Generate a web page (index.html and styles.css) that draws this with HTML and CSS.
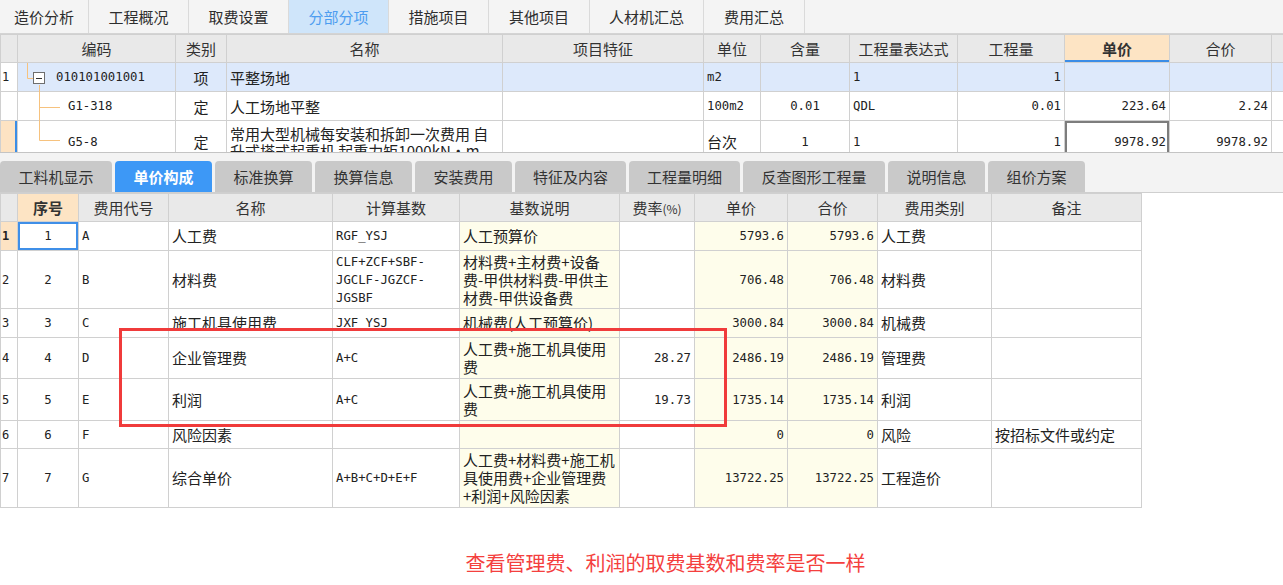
FILE: index.html
```html
<!DOCTYPE html>
<html lang="zh">
<head>
<meta charset="utf-8">
<title>单价构成</title>
<link rel="stylesheet" href="styles.css">
</head>
<body>
<div class="app">
  <div class="topbar">
    <div class="tab w89">造价分析</div>
    <div class="tab w100">工程概况</div>
    <div class="tab w100">取费设置</div>
    <div class="tab w100 active">分部分项</div>
    <div class="tab w100">措施项目</div>
    <div class="tab w101">其他项目</div>
    <div class="tab w114">人材机汇总</div>
    <div class="tab w101">费用汇总</div>
  </div>

  <div class="toppanel">
    <table class="tt">
      <colgroup>
        <col class="c17"><col class="c158"><col class="c51"><col class="c276"><col class="c201"><col class="c57"><col class="c89"><col class="c108"><col class="c107"><col class="c105"><col class="c102"><col class="c12">
      </colgroup>
      <thead>
        <tr>
          <th></th><th>编码</th><th>类别</th><th>名称</th><th>项目特征</th><th>单位</th><th>含量</th><th>工程量表达式</th><th>工程量</th><th class="hl">单价</th><th>合价</th><th></th>
        </tr>
      </thead>
      <tbody>
        <tr class="r1 sel">
          <td class="rn">1</td>
          <td class="code m"><span class="ind1">010101001001</span></td>
          <td class="c">项</td>
          <td>平整场地</td>
          <td></td>
          <td class="m">m2</td>
          <td></td>
          <td class="m">1</td>
          <td class="m r">1</td>
          <td></td>
          <td></td>
          <td></td>
        </tr>
        <tr class="r2">
          <td class="rn"></td>
          <td class="code m"><span class="ind2">G1-318</span></td>
          <td class="c">定</td>
          <td>人工场地平整</td>
          <td></td>
          <td class="m">100m2</td>
          <td class="m c">0.01</td>
          <td class="m">QDL</td>
          <td class="m r">0.01</td>
          <td class="m r">223.64</td>
          <td class="m r">2.24</td>
          <td></td>
        </tr>
        <tr class="r3">
          <td class="rn cur"></td>
          <td class="code m"><span class="ind2">G5-8</span></td>
          <td class="c">定</td>
          <td class="two">常用大型机械每安装和拆卸一次费用 自<br>升式塔式起重机 起重力矩1000kN·m</td>
          <td></td>
          <td>台次</td>
          <td class="m c">1</td>
          <td class="m">1</td>
          <td class="m r">1</td>
          <td class="m r focus">9978.92</td>
          <td class="m r">9978.92</td>
          <td></td>
        </tr>
      </tbody>
    </table>
    <svg class="tree" width="70" height="119" viewBox="0 0 70 119">
      <g stroke="#f6c27e" stroke-width="1" fill="none">
        <path d="M27.5 29 V44.5 H33"/>
        <path d="M39.5 51 V106.5"/>
        <path d="M39.5 73.5 H60"/>
        <path d="M39.5 106.5 H60"/>
      </g>
      <rect x="33.5" y="38.5" width="11" height="11" fill="#fff" stroke="#6e6e6e"/>
      <path d="M36 44.5 H42" stroke="#333" stroke-width="1"/>
    </svg>
  </div>

  <div class="subtabs">
    <div class="stab w112">工料机显示</div>
    <div class="stab w97 active">单价构成</div>
    <div class="stab w97">标准换算</div>
    <div class="stab w97">换算信息</div>
    <div class="stab w97">安装费用</div>
    <div class="stab w111">特征及内容</div>
    <div class="stab w111">工程量明细</div>
    <div class="stab w142">反查图形工程量</div>
    <div class="stab w97">说明信息</div>
    <div class="stab w97">组价方案</div>
  </div>

  <div class="bottom">
    <table class="bt">
      <colgroup>
        <col class="d17"><col class="d61"><col class="d90"><col class="d164"><col class="d127"><col class="d160"><col class="d75"><col class="d93"><col class="d90"><col class="d114"><col class="d150">
      </colgroup>
      <thead>
        <tr>
          <th></th><th class="hl">序号</th><th>费用代号</th><th>名称</th><th>计算基数</th><th>基数说明</th><th>费率<span class="pct">(%)</span></th><th>单价</th><th>合价</th><th>费用类别</th><th>备注</th>
        </tr>
      </thead>
      <tbody>
        <tr class="h29">
          <td class="rn cur">1</td><td class="m c focus">1</td><td class="m">A</td><td>人工费</td><td class="m">RGF_YSJ</td><td class="y">人工预算价</td><td></td><td class="m r y">5793.6</td><td class="m r y">5793.6</td><td>人工费</td><td></td>
        </tr>
        <tr class="h58">
          <td class="rn">2</td><td class="m c">2</td><td class="m">B</td><td>材料费</td><td class="m">CLF+ZCF+SBF-<br>JGCLF-JGZCF-<br>JGSBF</td><td class="y">材料费+主材费+设备<br>费-甲供材料费-甲供主<br>材费-甲供设备费</td><td></td><td class="m r y">706.48</td><td class="m r y">706.48</td><td>材料费</td><td></td>
        </tr>
        <tr class="h29">
          <td class="rn">3</td><td class="m c">3</td><td class="m">C</td><td>施工机具使用费</td><td class="m">JXF_YSJ</td><td class="y">机械费(人工预算价)</td><td></td><td class="m r y">3000.84</td><td class="m r y">3000.84</td><td>机械费</td><td></td>
        </tr>
        <tr class="h41">
          <td class="rn">4</td><td class="m c">4</td><td class="m">D</td><td>企业管理费</td><td class="m">A+C</td><td class="y">人工费+施工机具使用<br>费</td><td class="m r">28.27</td><td class="m r y">2486.19</td><td class="m r y">2486.19</td><td>管理费</td><td></td>
        </tr>
        <tr class="h42">
          <td class="rn">5</td><td class="m c">5</td><td class="m">E</td><td>利润</td><td class="m">A+C</td><td class="y">人工费+施工机具使用<br>费</td><td class="m r">19.73</td><td class="m r y">1735.14</td><td class="m r y">1735.14</td><td>利润</td><td></td>
        </tr>
        <tr class="h28">
          <td class="rn">6</td><td class="m c">6</td><td class="m">F</td><td>风险因素</td><td></td><td class="y"></td><td></td><td class="m r y">0</td><td class="m r y">0</td><td>风险</td><td>按招标文件或约定</td>
        </tr>
        <tr class="h59">
          <td class="rn">7</td><td class="m c">7</td><td class="m">G</td><td>综合单价</td><td class="m">A+B+C+D+E+F</td><td class="y">人工费+材料费+施工机<br>具使用费+企业管理费<br>+利润+风险因素</td><td></td><td class="m r y">13722.25</td><td class="m r y">13722.25</td><td>工程造价</td><td></td>
        </tr>
      </tbody>
    </table>
    <div class="redbox"></div>
  </div>

  <p class="caption">查看管理费、利润的取费基数和费率是否一样</p>
</div>
</body>
</html>
```

FILE: styles.css
```css
html, body {
  margin: 0;
  padding: 0;
  background: #ffffff;
}
body {
  font-family: "Noto Sans CJK SC", "Noto Sans", sans-serif;
  color: #333333;
  width: 1283px;
  height: 585px;
  overflow: hidden;
}

/* ---------- top tab bar ---------- */
.topbar {
  display: flex;
  height: 33px;
  background: #f4f4f4;
  border-bottom: 1px solid #d4d4d4;
}
.tab {
  box-sizing: border-box;
  display: flex;
  align-items: center;
  justify-content: center;
  font-size: 15px;
  color: #2e2e2e;
  border-right: 1px solid #dadada;
}
.tab.active {
  background: #cfe5fa;
  color: #4d9df0;
}
.w89 { width: 89px; }
.w100 { width: 100px; }
.w101 { width: 101px; }
.w114 { width: 114px; }

/* ---------- top grid ---------- */
.toppanel {
  position: relative;
  height: 118px;
  overflow: hidden;
  border-bottom: 1px solid #c4c4c4;
}
.tt, .bt {
  border-collapse: collapse;
  table-layout: fixed;
}
.tt { width: 1283px; }
.tt th, .tt td, .bt th, .bt td {
  border: 1px solid #d0d0d0;
  padding: 0 3px;
  overflow: hidden;
  white-space: nowrap;
  font-size: 15px;
  color: #222;
}
.tt th, .bt th {
  background: #e9e9e9;
  font-weight: normal;
  color: #333;
  height: 27px;
  text-align: center;
}
.tt th.hl {
  background: #fde4c4;
  font-weight: bold;
  box-shadow: inset 0 -2px 0 #3b8de6;
}
.bt th.hl {
  background: #fde4c4;
  font-weight: bold;
}
.pct { font-size: 12px; }
.tt tr.r1 td, .tt tr.r2 td { height: 28px; }
.tt tr.r3 td { height: 41px; }
.tt tr.sel td { background: #dde9fb; }
.tt tr.sel td.rn { background: #ffffff; }
.tt td.rn, .bt td.rn {
  padding: 0 1px;
  font-family: "DejaVu Sans Mono", monospace;
  font-size: 12px;
  text-align: left;
}
.tt td.rn.cur {
  background: #fde3c3;
  box-shadow: inset -2px 0 0 #3b8de6;
}
.tt td.two {
  white-space: nowrap;
  line-height: 17px;
}
.code { position: relative; }
.ind1 { padding-left: 35px; }
.ind2 { padding-left: 47px; }
.tree {
  position: absolute;
  left: 0;
  top: 0;
}

.m {
  font-family: "DejaVu Sans Mono", "Noto Sans CJK SC", monospace;
  font-size: 12.3px !important;
}
.c { text-align: center; }
.r { text-align: right; }
.tt td.focus { box-shadow: inset 0 0 0 2px #7d7d7d; }

.c17 { width: 17px; } .c158 { width: 158px; } .c51 { width: 51px; } .c276 { width: 276px; }
.c201 { width: 201px; } .c57 { width: 57px; } .c89 { width: 89px; } .c108 { width: 108px; }
.c107 { width: 107px; } .c105 { width: 105px; } .c102 { width: 102px; } .c12 { width: 12px; }

/* ---------- sub tabs ---------- */
.subtabs {
  box-sizing: border-box;
  height: 40px;
  padding-top: 8px;
  display: flex;
  align-items: flex-end;
  gap: 3px;
  background: #f3f3f3;
  border-bottom: 1px solid #cfcfcf;
}
.stab {
  box-sizing: border-box;
  height: 31px;
  display: flex;
  align-items: center;
  justify-content: center;
  background: #c9c9c9;
  border-radius: 4px 4px 0 0;
  font-size: 15px;
  color: #333;
}
.stab.active {
  background: #3d98f6;
  color: #ffffff;
  font-weight: bold;
}
.w112 { width: 112px; }
.w97 { width: 97px; }
.w111 { width: 111px; }
.w142 { width: 142px; }

/* ---------- bottom grid ---------- */
.bottom { position: relative; }
.bt { width: 1141px; }
.bt td { line-height: 18px; }
.bt td.y { background: #fefdeb; }
.bt td.rn.cur { background: #fde3c3; font-weight: bold; }
.bt td.focus { box-shadow: inset 0 0 0 2px #3f8fe8; }
.bt tr.h29 td { height: 28px; }
.bt tr.h28 td { height: 27px; }
.bt tr.h41 td { height: 40px; }
.bt tr.h42 td { height: 41px; }
.bt tr.h58 td { height: 57px; }
.bt tr.h59 td { height: 58px; }

.d17 { width: 17px; } .d61 { width: 61px; } .d90 { width: 90px; } .d164 { width: 164px; }
.d127 { width: 127px; } .d160 { width: 160px; } .d75 { width: 75px; } .d93 { width: 93px; }
.d114 { width: 114px; } .d150 { width: 150px; }

.redbox {
  position: absolute;
  left: 119px;
  top: 135px;
  width: 608px;
  height: 99px;
  box-sizing: border-box;
  border: 3px solid #f03b3b;
}

.caption {
  margin: 41px 0 0 0;
  padding-left: 48px;
  text-align: center;
  font-size: 20px;
  line-height: 28px;
  color: #f4403e;
}
```
